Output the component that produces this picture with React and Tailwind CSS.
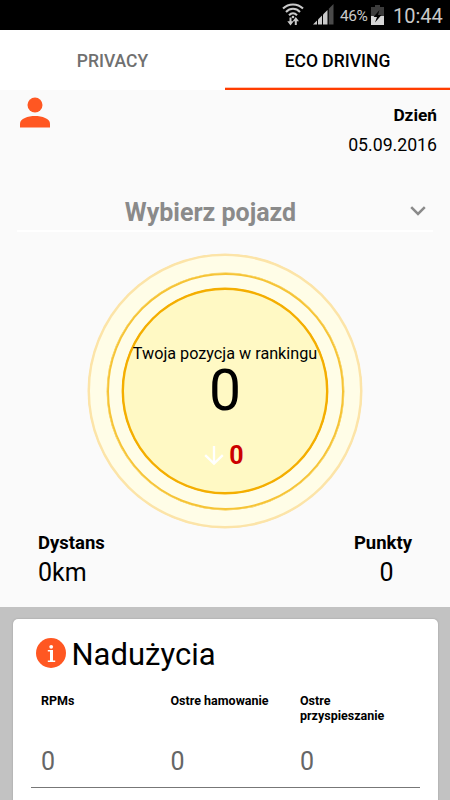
const violations = [
  { label: 'RPMs', value: 0 },
  { label: 'Ostre hamowanie', value: 0 },
  { label: 'Ostre przyspieszanie', value: 0 },
];

function WifiIcon() {
  return (
    <svg className="block" width="22" height="24" viewBox="0 0 22 24" fill="none" stroke="#c9c9c9">
      <path d="M1 5.500C6.500 0 15.500 0 21 5.500" strokeWidth="2" />
      <path d="M4 9C8 4.800 14 4.800 18 9" strokeWidth="2" />
      <path d="M7 12.200C9.500 9.500 12.500 9.500 15 12.200" strokeWidth="2" />
      <circle cx="11" cy="14" r="1.300" fill="#c9c9c9" stroke="none" />
      <path d="M8.500 14.500v5M13.800 22v-5" strokeWidth="2" />
      <path d="M5.300 18.300h6.400L8.500 22.500zM10.600 18.200h6.400L13.800 14z" fill="#c9c9c9" stroke="none" />
    </svg>
  );
}

function SignalIcon() {
  return (
    <svg className="block" width="21" height="21" viewBox="0 0 21 21">
      <path d="M0 20.500 4 16.500v4z" fill="#c9c9c9" />
      <path d="M5 15.500 9 11.500v9H5z" fill="#c9c9c9" />
      <path d="M10 10.500 14.500 6v14.500H10z" fill="#c9c9c9" />
      <path d="M15.800 4.700 20.500 0v20.500h-4.700z" fill="#4a4a4a" />
    </svg>
  );
}

function BatteryIcon() {
  return (
    <svg className="block" width="13" height="20" viewBox="0 0 13 20">
      <path d="M4 0h5v2h4v9H0V2h4z" fill="#3c3c3c" />
      <path d="M0 11h13v9H0z" fill="#d6d6d6" />
      <path d="M8.500 5 2.500 12h3.500l-2 5.500 6.500-7.500H7z" fill="#000" />
    </svg>
  );
}

function StatusBar() {
  return (
    <div className="flex h-[30px] items-start bg-black text-[#c9c9c9]">
      <div className="ml-[282px] mt-[3px]"><WifiIcon /></div>
      <div className="ml-[9px] mt-1"><SignalIcon /></div>
      <span className="ml-[6px] w-[31px] whitespace-nowrap text-[15.500px] leading-[32px] tracking-[-0.400px]">46%</span>
      <div className="mt-[5px]"><BatteryIcon /></div>
      <span className="ml-[9px] text-[20px] leading-[32px]">10:44</span>
    </div>
  );
}

function Tabs() {
  return (
    <nav className="grid h-[60px] grid-cols-2 bg-white text-center text-[17.500px] font-medium leading-[62px]">
      <div className="text-[#707070]">PRIVACY</div>
      <div className="h-[60px] border-b-2 border-[#ff3d00] text-black shadow-[inset_0_-0.500px_0_#ff8a66]">ECO DRIVING</div>
    </nav>
  );
}

function Ranking() {
  return (
    <div className="mx-auto mt-[22px] flex size-[274px] items-center justify-center rounded-full border-2 border-[#fce4a8] bg-[#fffde7] shadow-[0_0_0_0.500px_#fce4a8]">
      <div className="flex size-[237px] shrink-0 items-center justify-center rounded-full border-2 border-[#f6c436] shadow-[0_0_0_0.400px_#f6c436]">
        <div className="flex size-[206px] shrink-0 flex-col items-center rounded-full border-2 border-[#f4ae00] bg-[#fff9c4] shadow-[0_0_0_0.400px_#f4ae00]">
          <span className="mt-[54px] whitespace-nowrap text-[16.200px] leading-5">Twoja pozycja w rankingu</span>
          <span className="text-[57px] leading-[54px]">0</span>
          <div className="mr-[2px] mt-[26px] flex items-center">
            <svg className="mr-[5px] block" width="20" height="20" viewBox="0 0 20 20" fill="none" stroke="white" strokeWidth="2.300">
              <path d="M10 0v17.500M1.200 9.200l8.800 8.500 8.800-8.500" />
            </svg>
            <span className="text-[25px] font-bold leading-6 text-[#cc0000]">0</span>
          </div>
        </div>
      </div>
    </div>
  );
}

export default function App() {
  return (
    <div className="h-[800px] w-[450px] overflow-hidden bg-[#fafafa] font-['Roboto',sans-serif] text-black">
      <StatusBar />
      <Tabs />
      <header className="flex h-[90px] justify-between pl-5 pr-[13px]">
        <svg className="mt-[7px] block" width="30" height="31" viewBox="0 0 30 31" fill="#ff5722">
          <circle cx="15" cy="8" r="7.500" />
          <path d="M0 30.500v-4C0 21.500 8 19 15 19s15 2.500 15 7.500v4z" />
        </svg>
        <div className="mt-[10px] text-right text-[17.700px] leading-[30px]">
          <div className="text-[17.300px] font-bold">Dzień</div>
          <div>05.09.2016</div>
        </div>
      </header>
      <div className="mx-[17px] flex h-[52px] items-center border-b-2 border-white pt-[12px] text-[#8a8a8a]">
        <span className="mr-[6px] mt-[3px] flex-1 text-center text-[25px] font-bold leading-7">Wybierz pojazd</span>
        <svg className="mr-[7px] block" width="16" height="10" viewBox="0 0 16 10" fill="none" stroke="#8a8a8a" strokeWidth="2.500">
          <path d="M1.200 1.200 8 8l6.800-6.800" />
        </svg>
      </div>
      <Ranking />
      <div className="flex h-[79px] justify-between px-[38px] text-[25px] leading-[29px]">
        <div>
          <div className="text-[18.500px] font-bold leading-[30px]">Dystans</div>
          <div>0km</div>
        </div>
        <div className="text-center">
          <div className="text-[18.500px] font-bold leading-[30px]">Punkty</div>
          <div className="pl-[7px]">0</div>
        </div>
      </div>
      <section className="h-[193px] bg-[#c2c2c2] pl-[12.500px] pr-[12.500px] pt-3">
        <div className="h-[190px] rounded-[5px] bg-white shadow-[0_0_2px_#999]">
          <div className="flex h-[75px] items-center pl-[23.500px]">
            <svg className="-mt-[7px] block" width="30" height="30" viewBox="0 0 30 30">
              <circle cx="15" cy="15" r="15" fill="#ff5722" />
              <circle cx="15.200" cy="8.800" r="1.900" fill="white" />
              <path d="M11.800 12h5.200v10.500h2.200v1.500h-7.400v-1.500h2.200v-9h-2.200z" fill="white" />
            </svg>
            <h1 className="-mt-[3px] ml-[5.500px] text-[31px] leading-9">Nadużycia</h1>
          </div>
          <div className="ml-[18.500px] mr-[18px] grid h-[94px] grid-cols-3 border-b border-[#777]">
            {violations.map((item) => (
              <div key={item.label} className="pl-[10px]">
                <div className="h-[50px] w-[100px] text-[12.500px] font-bold leading-[14.500px]">{item.label}</div>
                <div className="text-[25px] leading-[36px] text-[#666]">{item.value}</div>
              </div>
            ))}
          </div>
        </div>
      </section>
    </div>
  );
}
